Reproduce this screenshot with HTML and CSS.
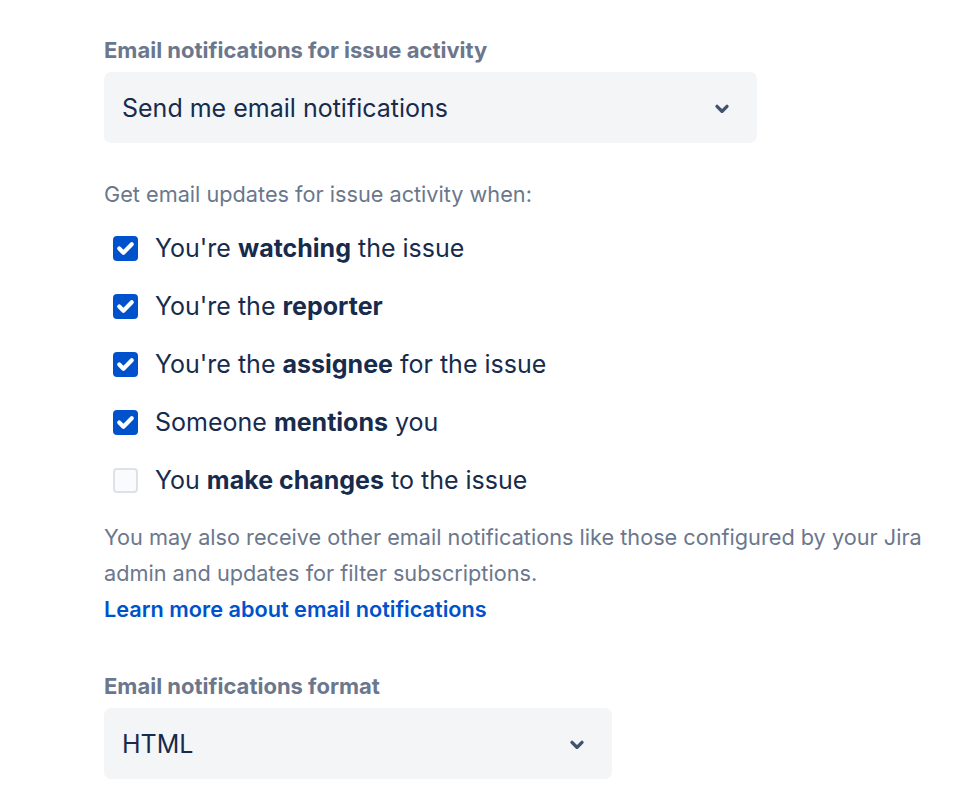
FILE: index.html
```html
<!DOCTYPE html>
<html lang="en">
<head>
    <meta charset="UTF-8">
    <meta name="viewport" content="width=device-width, initial-scale=1.0">
    <title>Email notifications</title>
    <link rel="stylesheet" href="styles.css">
</head>
<body>
    <div class="settings">
        <label class="field-label" for="notify">Email notifications for issue activity</label>
        <div class="select select-wide" id="notify">
            <span>Send me email notifications</span>
            <svg class="chevron" width="40" height="40" viewBox="0 0 24 24"><path d="M8.292 10.293a1.009 1.009 0 0 0 0 1.419l2.939 2.965c.218.215.5.322.779.322s.556-.107.769-.322l2.93-2.955a1.01 1.01 0 0 0 0-1.419.987.987 0 0 0-1.406 0l-2.298 2.317-2.307-2.327a.99.99 0 0 0-1.406 0z" fill="currentColor"/></svg>
        </div>

        <p class="hint">Get email updates for issue activity when:</p>
        <ul class="checks">
            <li>
                <span class="box checked"><svg width="25" height="25" viewBox="6 6 12 12"><path d="M9.707 11.293a1 1 0 1 0-1.414 1.414l2 2a1 1 0 0 0 1.414 0l4-4a1 1 0 1 0-1.414-1.414L11 12.586l-1.293-1.293z" fill="#fff"/></svg></span>
                <span>You're <b>watching</b> the issue</span>
            </li>
            <li>
                <span class="box checked"><svg width="25" height="25" viewBox="6 6 12 12"><path d="M9.707 11.293a1 1 0 1 0-1.414 1.414l2 2a1 1 0 0 0 1.414 0l4-4a1 1 0 1 0-1.414-1.414L11 12.586l-1.293-1.293z" fill="#fff"/></svg></span>
                <span>You're the <b>reporter</b></span>
            </li>
            <li>
                <span class="box checked"><svg width="25" height="25" viewBox="6 6 12 12"><path d="M9.707 11.293a1 1 0 1 0-1.414 1.414l2 2a1 1 0 0 0 1.414 0l4-4a1 1 0 1 0-1.414-1.414L11 12.586l-1.293-1.293z" fill="#fff"/></svg></span>
                <span>You're the <b>assignee</b> for the issue</span>
            </li>
            <li>
                <span class="box checked"><svg width="25" height="25" viewBox="6 6 12 12"><path d="M9.707 11.293a1 1 0 1 0-1.414 1.414l2 2a1 1 0 0 0 1.414 0l4-4a1 1 0 1 0-1.414-1.414L11 12.586l-1.293-1.293z" fill="#fff"/></svg></span>
                <span>Someone <b>mentions</b> you</span>
            </li>
            <li>
                <span class="box"></span>
                <span>You <b>make changes</b> to the issue</span>
            </li>
        </ul>

        <p class="note">You may also receive other email notifications like those configured by your Jira admin and updates for filter subscriptions.</p>
        <a class="learn" href="#">Learn more about email notifications</a>

        <label class="field-label second" for="format">Email notifications format</label>
        <div class="select select-narrow" id="format">
            <span>HTML</span>
            <svg class="chevron" width="40" height="40" viewBox="0 0 24 24"><path d="M8.292 10.293a1.009 1.009 0 0 0 0 1.419l2.939 2.965c.218.215.5.322.779.322s.556-.107.769-.322l2.93-2.955a1.01 1.01 0 0 0 0-1.419.987.987 0 0 0-1.406 0l-2.298 2.317-2.307-2.327a.99.99 0 0 0-1.406 0z" fill="currentColor"/></svg>
        </div>
    </div>
</body>
</html>
```

FILE: styles.css
```css
body {
    margin: 0;
    padding: 0;
    background-color: #fff;
    font-family: Inter, Roboto, "Liberation Sans", Arial, sans-serif;
    color: #172B4D;
}
.settings {
    width: 840px;
    padding: 38px 0 0 104px;
}
.field-label {
    display: block;
    font-size: 22px;
    line-height: 24px;
    font-weight: 700;
    color: #6B778C;
    margin-bottom: 10px;
}
.field-label.second {
    margin-top: 47px;
}
.select {
    display: flex;
    align-items: center;
    justify-content: space-between;
    box-sizing: border-box;
    height: 71px;
    padding: 0 15px 0 18px;
    background-color: #F4F5F7;
    border-radius: 7px;
    font-size: 25px;
    color: #172B4D;
}
.select-wide {
    width: 653px;
}
.select-narrow {
    width: 508px;
}
.chevron {
    color: #42526E;
}
.hint {
    margin: 37px 0 11px;
    font-size: 21.7px;
    line-height: 28px;
    color: #6B778C;
}
.checks {
    list-style: none;
    margin: 0;
    padding: 0;
}
.checks li {
    display: flex;
    align-items: center;
    height: 58px;
    padding-left: 9px;
    font-size: 25px;
    color: #172B4D;
}
.checks b {
    font-weight: 700;
}
.box {
    display: block;
    box-sizing: border-box;
    width: 25px;
    height: 25px;
    margin-right: 17px;
    border-radius: 4px;
    background-color: #FAFBFC;
    border: 2px solid #DFE1E6;
}
.box.checked {
    background-color: #0052CC;
    border: none;
}
.box svg {
    display: block;
}
.note {
    margin: 10px 0 0;
    font-size: 21.7px;
    line-height: 36px;
    color: #6B778C;
}
.learn {
    display: block;
    font-size: 21.7px;
    line-height: 36px;
    font-weight: 600;
    color: #0052CC;
    text-decoration: none;
}
```
